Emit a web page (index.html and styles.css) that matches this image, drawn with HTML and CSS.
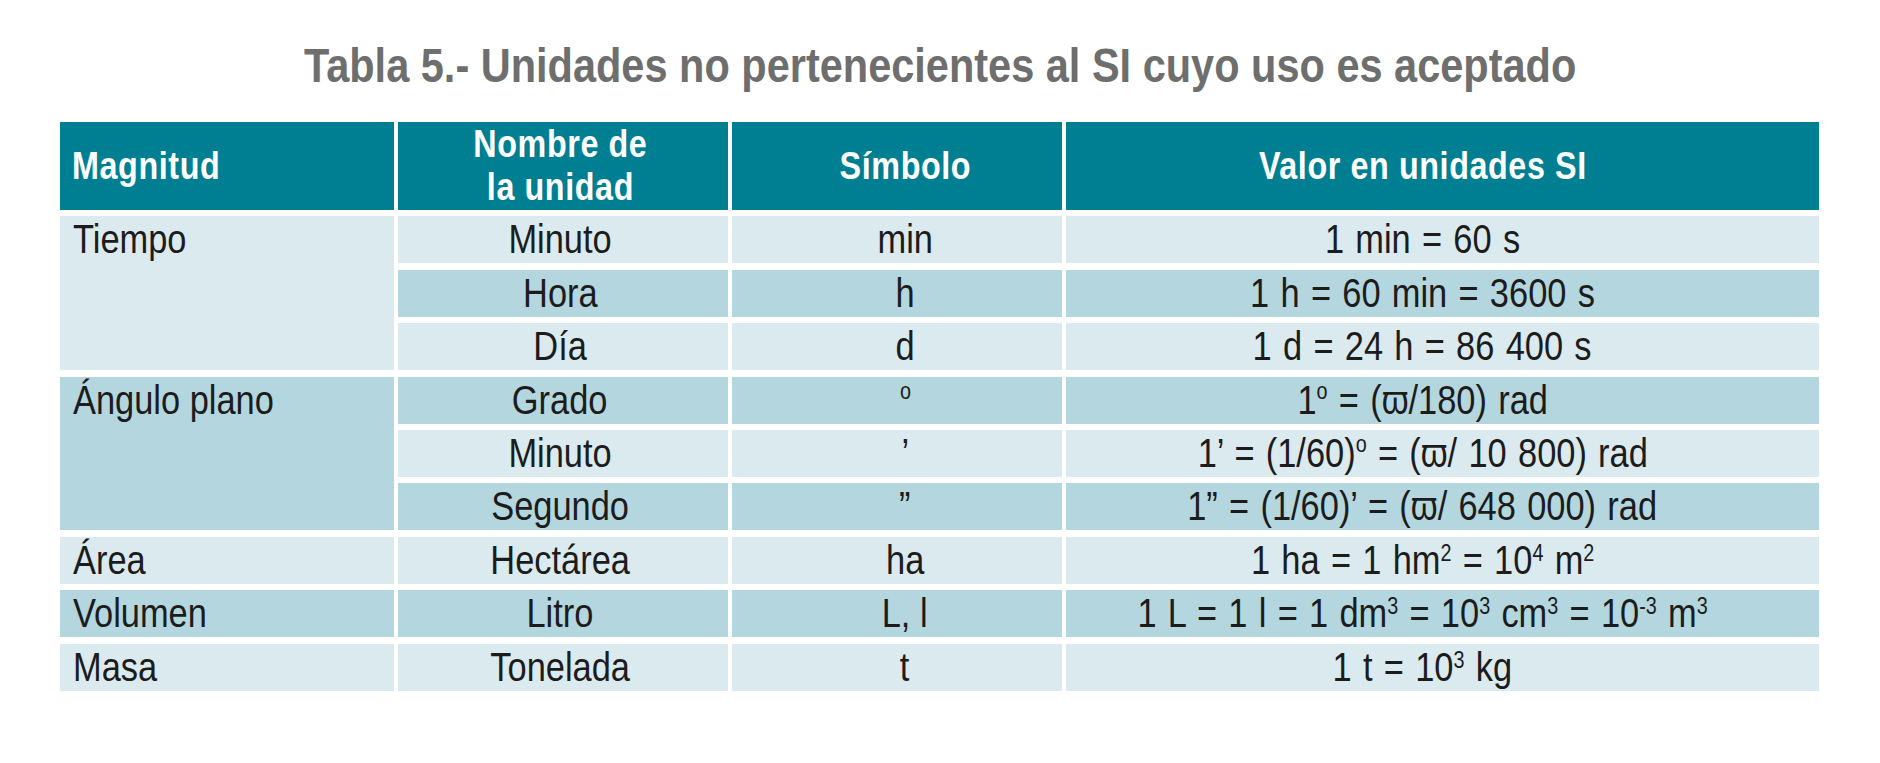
FILE: index.html
```html
<!DOCTYPE html>
<html lang="es">
<head>
<meta charset="utf-8">
<title>Tabla 5</title>
<link rel="stylesheet" href="styles.css">
</head>
<body>
<div class="page">
  <h1 class="title"><span class="cond">Tabla 5.- Unidades no pertenecientes al SI cuyo uso es aceptado</span></h1>
  <div class="table">
    <div class="th th-left"><span class="cond">Magnitud</span></div>
    <div class="th c2"><span class="cond">Nombre de<br>la unidad</span></div>
    <div class="th c3"><span class="cond">Símbolo</span></div>
    <div class="th c4"><span class="cond">Valor en unidades SI</span></div>

    <div class="td mag light span3"><span class="cond">Tiempo</span></div>
    <div class="td c2 light"><span class="cond">Minuto</span></div>
    <div class="td c3 light"><span class="cond">min</span></div>
    <div class="td c4 light"><span class="cond">1 min = 60 s</span></div>
    <div class="td c2 dark"><span class="cond">Hora</span></div>
    <div class="td c3 dark"><span class="cond">h</span></div>
    <div class="td c4 dark"><span class="cond">1 h = 60 min = 3600 s</span></div>
    <div class="td c2 light"><span class="cond">Día</span></div>
    <div class="td c3 light"><span class="cond">d</span></div>
    <div class="td c4 light"><span class="cond">1 d = 24 h = 86 400 s</span></div>

    <div class="td mag dark span3"><span class="cond">Ángulo plano</span></div>
    <div class="td c2 dark"><span class="cond">Grado</span></div>
    <div class="td c3 dark"><span class="cond"><sup class="deg">o</sup></span></div>
    <div class="td c4 dark"><span class="cond">1<sup class="deg">o</sup> = (ϖ/180) rad</span></div>
    <div class="td c2 light"><span class="cond">Minuto</span></div>
    <div class="td c3 light"><span class="cond">’</span></div>
    <div class="td c4 light"><span class="cond">1’ = (1/60)<sup class="deg">o</sup> = (ϖ/ 10 800) rad</span></div>
    <div class="td c2 dark"><span class="cond">Segundo</span></div>
    <div class="td c3 dark"><span class="cond">”</span></div>
    <div class="td c4 dark"><span class="cond">1” = (1/60)’ = (ϖ/ 648 000) rad</span></div>

    <div class="td mag light"><span class="cond">Área</span></div>
    <div class="td c2 light"><span class="cond">Hectárea</span></div>
    <div class="td c3 light"><span class="cond">ha</span></div>
    <div class="td c4 light"><span class="cond">1 ha = 1 hm<sup>2</sup> = 10<sup>4</sup> m<sup>2</sup></span></div>

    <div class="td mag dark"><span class="cond">Volumen</span></div>
    <div class="td c2 dark"><span class="cond">Litro</span></div>
    <div class="td c3 dark"><span class="cond">L, l</span></div>
    <div class="td c4 dark"><span class="cond">1 L = 1 l = 1 dm<sup>3</sup> = 10<sup>3</sup> cm<sup>3</sup> = 10<sup>-3</sup> m<sup>3</sup></span></div>

    <div class="td mag light"><span class="cond">Masa</span></div>
    <div class="td c2 light"><span class="cond">Tonelada</span></div>
    <div class="td c3 light"><span class="cond">t</span></div>
    <div class="td c4 light"><span class="cond">1 t = 10<sup>3</sup> kg</span></div>
  </div>
</div>
</body>
</html>
```
FILE: styles.css
```css
* { box-sizing: border-box; }

html, body {
  margin: 0;
  padding: 0;
  background: #ffffff;
}

body {
  font-family: "Liberation Sans", Arial, sans-serif;
  color: #1c1c1c;
}

.page {
  width: 1880px;
  padding: 35px 60px 0 60px;
}

/* Condensed look: Helvetica-style glyphs narrowed horizontally */
.cond {
  display: inline-block;
  transform: scaleX(0.86);
  transform-origin: center center;
  white-space: nowrap;
}

.title {
  margin: 0 0 27px 0;
  font-size: 49px;
  line-height: 60px;
  font-weight: 700;
  color: #6e6e6e;
  text-align: center;
}

.title .cond {
  transform: scaleX(0.847);
}

.table {
  display: grid;
  grid-template-columns: 334px 330px 330px 1fr;
  grid-template-rows: 88px repeat(9, 47px);
  column-gap: 4px;
  row-gap: 6.4px;
  width: 1759px;
}

.th {
  background: #007f93;
  color: #ffffff;
  font-weight: 700;
  font-size: 38px;
  line-height: 43px;
  letter-spacing: 0.7px;
  display: flex;
  align-items: center;
  justify-content: center;
  text-align: center;
}

.th .cond {
  transform: scaleX(0.85);
}

.th-left {
  justify-content: flex-start;
  padding-left: 12px;
}

.th-left .cond {
  transform-origin: left center;
}

.td {
  font-size: 40px;
  line-height: 47px;
  text-align: center;
}

/* column content offsets */
.c2 { padding-right: 6px; }
.c3 { padding-left: 16px; }
.c4 { padding-right: 40px; }
.td.c4 { word-spacing: 2px; }

.mag {
  text-align: left;
  padding-left: 13px;
}

.mag .cond {
  transform-origin: left center;
}

.span3 {
  grid-row: span 3;
}

.light { background: #dbeaee; }
.dark { background: #b4d6de; }

sup {
  font-size: 23px;
  line-height: 0;
  vertical-align: 13px;
  word-spacing: 0;
}

sup.deg {
  font-size: 23px;
  vertical-align: 15px;
}
```
